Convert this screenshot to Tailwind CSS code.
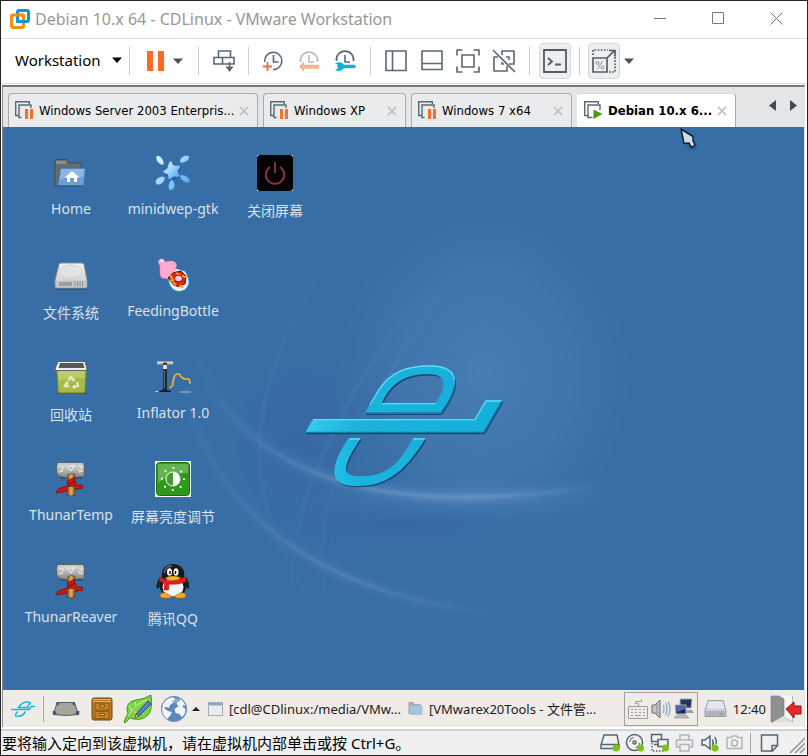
<!DOCTYPE html>
<html lang="zh-CN">
<head>
<meta charset="utf-8">
<meta name="viewport" content="width=device-width, initial-scale=1">
<title>Debian 10.x 64 - CDLinux - VMware Workstation</title>
<script src="https://cdn.jsdelivr.net/npm/@tailwindcss/browser@4"></script>
</head>
<body class="relative flex min-h-screen flex-col overflow-x-hidden border border-[#242424] bg-white font-['Noto_Sans','Noto_Sans_CJK_SC',sans-serif] text-black">

<!-- Shared gradients and symbols -->
<svg class="absolute size-0" aria-hidden="true">
  <defs>
    <linearGradient id="stone" x1="0" y1="0" x2="0" y2="1"><stop offset="0" stop-color="#d8d8d8"/><stop offset=".5" stop-color="#b0b0b0"/><stop offset="1" stop-color="#7a7a7a"/></linearGradient>
    <linearGradient id="wood" x1="0" y1="0" x2="1" y2="0"><stop offset="0" stop-color="#7b5423"/><stop offset=".5" stop-color="#e0ae62"/><stop offset="1" stop-color="#85591f"/></linearGradient>
    <linearGradient id="silver" x1="0" y1="0" x2="0" y2="1"><stop offset="0" stop-color="#f6f6f6"/><stop offset="1" stop-color="#c4c4c4"/></linearGradient>
    <linearGradient id="drop" x1="0" y1="0" x2="1" y2="1"><stop offset="0" stop-color="#eef9ff"/><stop offset=".5" stop-color="#9bd1fb"/><stop offset="1" stop-color="#4a9eee"/></linearGradient>
    <symbol id="vm-paused" viewBox="0 0 19 19">
      <path d="M3.500 14.500H.7V.7h13.600V3M6.500 16.500H4V4h12v3" fill="none" stroke="#5b6874" stroke-width="1.400"/>
      <path d="M10 8h3v10h-3zM15 8h3v10h-3z" fill="#f86f25"/>
    </symbol>
    <symbol id="vm-running" viewBox="0 0 19 19">
      <path d="M3.500 14.500H.7V.7h13.600V3M8.500 16.500H4V4h12v5" fill="none" stroke="#5b6874" stroke-width="1.400"/>
      <path d="M9.500 8.500 18.500 13l-9 5z" fill="#4a9a10"/>
    </symbol>
    <symbol id="hammer" viewBox="0 0 36 36">
      <path d="M6 14h24l-1 4H8z" fill="#17395c" opacity=".5"/>
      <path d="M5 1.500h25l1.500 5L31 16h-6l-6 2-13-2.500L3.500 12V6z" fill="url(#stone)" stroke="#4f5357" stroke-width=".8"/>
      <path d="M5 2h25l1 4.500H4z" fill="#c9c9c9"/>
      <path d="M7 6c4-3 5 3 1 3m5-5 5 6 4-6m-6 1h5m4 4c4 1 5-4 1-4M6 11l4-1m16 1 4-1" fill="none" stroke="#f4f4f4" stroke-width="1"/>
      <path d="M15 13.500q3.500-2 7 0L21 31l1 3q-4 2.800-8 0l1-3z" fill="url(#wood)" stroke="#5f3d14" stroke-width=".7"/>
      <path d="m14 20 8-4-.5 4.500-7 3.500zM14 25l8-5 2 4 5 0 1 3-8 1.500-3-3-6 5-10 1.500 2-4z" fill="#d11510" stroke="#7d0705" stroke-width=".7"/>
      <path d="M15 25.500h6.500l.5 8q-4 3-8 0z" fill="url(#wood)" stroke="#5f3d14" stroke-width=".7"/>
    </symbol>
    <symbol id="tab-close" viewBox="0 0 10 10"><path d="m1 1 8 8m0-8-8 8" stroke="#bcbec0" stroke-width="1.700" fill="none"/></symbol>
    <symbol id="caret" viewBox="0 0 10 6"><path d="M0 .5h10L5 6z" fill="currentColor"/></symbol>
  </defs>
</svg>

<!-- Title bar -->
<header class="flex h-[38px] shrink-0 items-center border-b border-[#e2e2e2] pr-0.5 pb-0.5 pl-[9px]">
  <svg class="size-5" viewBox="0 0 20 20" fill="none" stroke-width="3" aria-hidden="true">
    <rect x="7.500" y="1.500" width="11" height="11" rx="1.500" stroke="#0c97d2"/>
    <rect x="1.500" y="6" width="12" height="12.500" rx="1.500" stroke="#f4900c"/>
    <path d="M7.500 4v8.500h8" stroke="#0c97d2"/>
    <path d="M6 6h6.500q1 0 1 1.500V10" stroke="#f4900c"/>
  </svg>
  <h1 class="ml-[5px] grow truncate text-base leading-5 text-[#989898]">Debian 10.x 64 - CDLinux - VMware Workstation</h1>
  <div class="flex h-full shrink-0 text-[#777]">
    <button type="button" aria-label="Minimize" class="flex w-[58px] items-center justify-center"><svg class="size-[13px]" viewBox="0 0 13 13"><path d="M0 6.500h12" stroke="currentColor"/></svg></button>
    <button type="button" aria-label="Maximize" class="flex w-[58px] items-center justify-center"><svg class="size-[13px]" viewBox="0 0 13 13"><path d="M.5.500h11v11H.5z" fill="none" stroke="currentColor"/></svg></button>
    <button type="button" aria-label="Close" class="flex w-[58px] items-center justify-center"><svg class="size-[13px]" viewBox="0 0 13 13"><path d="m.5.500 12 12m0-12-12 12" stroke="currentColor"/></svg></button>
  </div>
</header>

<!-- Toolbar -->
<nav aria-label="Toolbar" class="flex h-[45px] shrink-0 items-center border-b border-[#dedede] pb-px pl-3.5 text-[#5c6874]">
  <button type="button" class="flex h-8 w-[107px] shrink-0 items-center justify-between pb-0.5 text-[15px] leading-5 text-black">Workstation<svg class="h-[6px] w-2.5"><use href="#caret"/></svg></button>
  <i class="mx-[7px] h-7 w-px shrink-0 bg-[#cdcdcd]"></i>
  <button type="button" aria-label="Suspend" class="flex h-8 w-9 items-center justify-center"><svg class="h-5 w-[17px]" viewBox="0 0 17 20"><path d="M0 0h6v20H0zM11 0h6v20h-6z" fill="#fb6c20"/></svg></button>
  <button type="button" aria-label="Power options" class="flex h-8 w-[18px] items-center text-[#465463]"><svg class="h-[6px] w-2.5"><use href="#caret"/></svg></button>
  <i class="mx-[7px] h-7 w-px shrink-0 bg-[#cdcdcd]"></i>
  <button type="button" aria-label="Send Ctrl+Alt+Del" class="flex h-8 w-9 items-center justify-center"><svg class="size-[22px]" viewBox="0 0 22 22" fill="none" stroke="currentColor" stroke-width="1.600"><path d="M5.500 1h12v6.500h-12zM1 7.500h8.500V14H1zM9.500 14V7.500H21V14H9.500M16.500 12v7"/><path d="M12.500 16.500h8L16.500 22z" fill="currentColor" stroke="none"/></svg></button>
  <i class="mx-1.5 h-7 w-px shrink-0 bg-[#cdcdcd]"></i>
  <button type="button" aria-label="Take snapshot" class="flex h-8 w-9 items-center justify-center"><svg class="size-[22px]" viewBox="0 0 22 22" fill="none" stroke-width="1.600"><path d="M2.700 12A8.600 8.600 0 1 1 11 19.500M11.500 5v7h5" stroke="currentColor"/><path d="M5.500 12v9M1 16.500h9" stroke="#f86f25" stroke-width="1.800"/></svg></button>
  <button type="button" aria-label="Revert snapshot" class="flex h-8 w-9 items-center justify-center"><svg class="size-[22px]" viewBox="0 0 22 22" fill="none" stroke-width="1.600"><path d="M2.500 12A8.600 8.600 0 1 1 19.500 12M11 5v7h5" stroke="#b6bdc2"/><path d="m1 16.500 5-5v3.200h15v4H6V22z" fill="#fdb18c"/></svg></button>
  <button type="button" aria-label="Snapshot manager" class="flex h-8 w-9 items-center justify-center"><svg class="size-[22px]" viewBox="0 0 22 22" fill="none" stroke-width="1.600"><path d="M2.500 11A8.600 8.600 0 1 1 19.500 11M11 5v7h5" stroke="currentColor"/><path d="M5 16.500h15" stroke="#08b1d5" stroke-width="3.600" stroke-linecap="round"/><path d="M1 13.500q6-3 8.500 1v4q-2.500 4-8.500 1.500l3.500-2v-3z" fill="#08b1d5"/></svg></button>
  <i class="mx-[7px] h-7 w-px shrink-0 bg-[#cdcdcd]"></i>
  <button type="button" aria-label="Show library" class="flex h-8 w-9 items-center justify-center"><svg class="size-[22px]" viewBox="0 0 22 22" fill="none" stroke="currentColor" stroke-width="1.600"><path d="M1 1h20v19.500H1zM7.500 1v19.500"/></svg></button>
  <button type="button" aria-label="Show thumbnail bar" class="flex h-8 w-9 items-center justify-center"><svg class="size-[22px]" viewBox="0 0 22 22" fill="none" stroke="currentColor" stroke-width="1.600"><path d="M1 1h20v18.500H1zM1 13.500h20"/></svg></button>
  <button type="button" aria-label="Full screen" class="flex h-8 w-9 items-center justify-center"><svg class="size-6" viewBox="0 0 24 24" fill="none" stroke="currentColor" stroke-width="1.600"><path d="M6 6h12v12H6zM1 6.500V1h5.500M17.500 1H23v5.500M23 17.500V23h-5.500M6.500 23H1v-5.500"/></svg></button>
  <button type="button" aria-label="Unity mode" class="flex h-8 w-9 items-center justify-center"><svg class="size-6" viewBox="0 0 24 24" fill="none" stroke="currentColor" stroke-width="1.600"><path d="M10 6V2h12v13h-5M6 8H2v14h13v-5M10 13v2h2M14 8h3v3M1 1l22 22"/></svg></button>
  <i class="mx-[7px] h-7 w-px shrink-0 bg-[#cdcdcd]"></i>
  <button type="button" aria-label="Console view" aria-pressed="true" class="ml-0.5 flex h-9 w-8 shrink-0 items-center justify-center rounded border border-[#d5d9da] bg-[#edefef]"><svg class="size-6 shrink-0" viewBox="0 0 24 24" fill="none" stroke="#4f5d69" stroke-width="1.800"><path d="M1 1h22v22H1zM5 9l4 3.500L5 16M12 15.500h6"/></svg></button>
  <i class="mx-2 h-7 w-px shrink-0 bg-[#cdcdcd]"></i>
  <button type="button" aria-label="Free stretch" aria-pressed="true" class="flex h-9 w-8 shrink-0 items-center justify-center rounded border border-[#d5d9da] bg-[#edefef]"><svg class="size-6 shrink-0" viewBox="0 0 24 24" fill="none" stroke="#4f5d69" stroke-width="1.700"><path d="M1 9h14v14H1zM15 9l7-7M17 1.500h6v6"/><path d="M1 6V1h15M23 8v15h-6" stroke-dasharray="1.700 1.500"/><path d="m5.500 20 5-8" stroke-width="1" stroke="#888f95"/><circle cx="5.500" cy="14" r="1.500" stroke-width="1" stroke="#888f95"/><circle cx="10.500" cy="18.500" r="1.500" stroke-width="1" stroke="#888f95"/></svg></button>
  <button type="button" aria-label="Stretch options" class="flex h-8 w-3.5 items-center justify-end text-[#465463]"><svg class="h-[6px] w-2.5"><use href="#caret"/></svg></button>
</nav>

<!-- Guest view -->
<main class="mt-px mr-0.5 ml-px flex grow flex-col border-t-2 border-r border-l border-t-[#77797b] border-r-[#e3e3e3] border-l-[#8d8a87] bg-[#e4e5e7]">
  <div class="flex h-10 shrink-0 items-end pl-[5px] font-['DejaVu_Sans_Condensed','DejaVu_Sans',sans-serif] text-[13px] leading-4">
    <div role="tablist" class="flex min-w-0 grow items-end gap-[5px]">
      <div class="flex h-[34px] w-[250px] items-center rounded-t border border-b-0 border-[#a8aaac] bg-[#eaebed] px-1.5">
        <button type="button" role="tab" class="flex min-w-0 grow items-center gap-[5px]"><svg class="size-[19px] shrink-0"><use href="#vm-paused"/></svg><span class="whitespace-nowrap">Windows Server 2003 Enterpris...</span></button>
        <button type="button" aria-label="Close tab" class="p-0.5"><svg class="size-2.5"><use href="#tab-close"/></svg></button>
      </div>
      <div class="flex h-[34px] w-[143px] items-center rounded-t border border-b-0 border-[#a8aaac] bg-[#eaebed] px-1.5">
        <button type="button" role="tab" class="flex min-w-0 grow items-center gap-[5px]"><svg class="size-[19px] shrink-0"><use href="#vm-paused"/></svg><span class="whitespace-nowrap">Windows XP</span></button>
        <button type="button" aria-label="Close tab" class="p-0.5"><svg class="size-2.5"><use href="#tab-close"/></svg></button>
      </div>
      <div class="flex h-[34px] w-[161px] items-center rounded-t border border-b-0 border-[#a8aaac] bg-[#eaebed] px-1.5">
        <button type="button" role="tab" class="flex min-w-0 grow items-center gap-[5px]"><svg class="size-[19px] shrink-0"><use href="#vm-paused"/></svg><span class="whitespace-nowrap">Windows 7 x64</span></button>
        <button type="button" aria-label="Close tab" class="p-0.5"><svg class="size-2.5"><use href="#tab-close"/></svg></button>
      </div>
      <div class="flex h-[34px] w-[159px] items-center rounded-t border border-b-0 border-t-[#d8d8d8] border-r-[#a8aaac] border-l-white bg-white px-1.5">
        <button type="button" role="tab" aria-selected="true" class="flex min-w-0 grow items-center gap-[5px] font-bold"><svg class="size-[19px] shrink-0"><use href="#vm-running"/></svg><span class="whitespace-nowrap">Debian 10.x 6...</span></button>
        <button type="button" aria-label="Close tab" class="p-0.5"><svg class="size-2.5"><use href="#tab-close"/></svg></button>
      </div>
    </div>
    <div class="flex h-full items-center gap-3 pr-1.5 pb-1 text-[#3f4c59]">
      <button type="button" aria-label="Scroll tabs left" class="px-px"><svg class="h-[11px] w-[7px]" viewBox="0 0 7 11"><path d="M7 0v11L0 5.500z" fill="currentColor"/></svg></button>
      <button type="button" aria-label="Scroll tabs right" class="px-px"><svg class="h-[11px] w-[7px]" viewBox="0 0 7 11"><path d="M0 0v11l7-5.500z" fill="currentColor"/></svg></button>
    </div>
  </div>

  <!-- Desktop -->
  <section aria-label="CDLinux desktop" class="relative grow bg-[#386ea6]">
    <svg class="absolute inset-0 size-full" viewBox="3 127 801 563" preserveAspectRatio="xMidYMid slice" fill="none" aria-hidden="true">
      <defs>
        <radialGradient id="glow"><stop offset="0" stop-color="#4a80b5" stop-opacity=".85"/><stop offset=".55" stop-color="#467cb3" stop-opacity=".55"/><stop offset="1" stop-color="#386ea6" stop-opacity="0"/></radialGradient>
        <radialGradient id="violet"><stop offset="0" stop-color="#3966a5" stop-opacity=".8"/><stop offset="1" stop-color="#386ea6" stop-opacity="0"/></radialGradient>
        <radialGradient id="lower"><stop offset="0" stop-color="#5482bf" stop-opacity=".45"/><stop offset="1" stop-color="#5080bc" stop-opacity="0"/></radialGradient>
        <linearGradient id="fade" gradientUnits="userSpaceOnUse" x1="190" y1="0" x2="610" y2="0"><stop offset="0" stop-color="#8db4dd" stop-opacity="0"/><stop offset=".35" stop-color="#93b3dd" stop-opacity=".22"/><stop offset=".7" stop-color="#93bce0" stop-opacity=".23"/><stop offset="1" stop-color="#8db4dd" stop-opacity="0"/></linearGradient>
        <linearGradient id="fade2" gradientUnits="userSpaceOnUse" x1="190" y1="0" x2="500" y2="0"><stop offset="0" stop-color="#8db4dd" stop-opacity=".03"/><stop offset=".5" stop-color="#93b3dd" stop-opacity=".17"/><stop offset="1" stop-color="#8db4dd" stop-opacity="0"/></linearGradient>
        <linearGradient id="thin" gradientUnits="userSpaceOnUse" x1="0" y1="230" x2="0" y2="610"><stop offset="0" stop-color="#7fb0dd" stop-opacity="0"/><stop offset=".5" stop-color="#84b0e0" stop-opacity=".1"/><stop offset="1" stop-color="#84b0e0" stop-opacity="0"/></linearGradient>
        <linearGradient id="cyan" x1="0" y1="0" x2="1" y2="0"><stop offset="0" stop-color="#38cdef"/><stop offset=".25" stop-color="#1ab4de"/><stop offset="1" stop-color="#16aedb"/></linearGradient>
        <filter id="soft"><feGaussianBlur stdDeviation="3"/></filter>
        <filter id="soft1"><feGaussianBlur stdDeviation="1"/></filter>
      </defs>
      <ellipse cx="300" cy="445" rx="120" ry="150" fill="url(#violet)"/>
      <ellipse cx="485" cy="375" rx="160" ry="190" fill="url(#glow)"/>
      <ellipse cx="400" cy="525" rx="160" ry="35" fill="url(#violet)"/>
      <ellipse cx="460" cy="498" rx="160" ry="22" fill="url(#lower)"/>
      <path d="M195 352C220 420 270 458 330 478S470 505 600 486" stroke="url(#fade)" stroke-width="9" filter="url(#soft)"/>
      <path d="M195 352C220 420 270 458 330 478S470 505 600 486" stroke="url(#fade)" stroke-width="3" filter="url(#soft1)"/>
      <path d="M190 405C205 465 240 510 290 545S410 604 500 615" stroke="url(#fade2)" stroke-width="8" filter="url(#soft)"/>
      <path d="M190 405C205 465 240 510 290 545S410 604 500 615" stroke="url(#fade2)" stroke-width="3" filter="url(#soft1)"/>
      <g stroke="url(#thin)" stroke-width="3" filter="url(#soft1)">
        <path d="M345 235C285 320 260 385 260 450S280 550 315 610"/>
        <path d="M480 235C420 290 380 345 350 400S290 520 290 600"/>
        <path d="M465 250C425 320 370 400 345 455S320 540 325 600"/>
      </g>
      <g transform="translate(290 340) scale(.3333)">
        <path transform="translate(3 4)" d="M45 279 69 237H555L588 181H638L582 279ZM223 221 265 150C300 95 350 76 420 76C480 76 500 100 495 135C492 160 475 190 453 221ZM276 189H436C455 165 465 140 459 123C452 105 435 103 410 103C340 103 300 135 276 189ZM176 295H212C190 330 170 360 168 388C170 405 185 409 210 409C280 409 310 380 335 350C350 330 360 310 370 295H406C385 335 350 375 330 392C290 425 250 438 205 438C155 438 133 425 133 395C133 365 155 325 176 295Z" fill="#123a63" opacity=".8" fill-rule="evenodd"/>
        <path d="M45 279 69 237H555L588 181H638L582 279ZM223 221 265 150C300 95 350 76 420 76C480 76 500 100 495 135C492 160 475 190 453 221ZM276 189H436C455 165 465 140 459 123C452 105 435 103 410 103C340 103 300 135 276 189ZM176 295H212C190 330 170 360 168 388C170 405 185 409 210 409C280 409 310 380 335 350C350 330 360 310 370 295H406C385 335 350 375 330 392C290 425 250 438 205 438C155 438 133 425 133 395C133 365 155 325 176 295Z" fill="url(#cyan)" fill-rule="evenodd"/>
        <path d="M69 239H555L588 183H636M240 195 265 152C300 97 350 78 420 78C470 78 490 95 494 120M276 191H436M178 297H210M370 297H404" stroke="#5fdcf5" stroke-width="4"/>
        <path d="M45 277H581L636 183M225 219H452C475 190 490 160 494 135" stroke="#0b7ea8" stroke-width="4"/>
      </g>
    </svg>

    <ul class="relative grid w-max auto-cols-[102px] grid-flow-col grid-rows-[repeat(5,102px)] pt-7 pl-[17px] text-center text-[14px] leading-5 text-[#dbe2ea]">
      <li><a href="#home" class="flex flex-col items-center gap-2"><svg class="size-9" viewBox="0 0 36 36"><path d="M2 31V5.500Q2 4.500 3 4.500h11l2 3.500h11q1 0 1 1V31z" fill="#696c6c" stroke="#484b4d"/><path d="M3 6h10v3H3z" fill="#8b8e8e"/><path d="M7.500 13h24q1 0 1 1l-1.500 15.500q0 1-1 1H4.500z" fill="#6c9dd4" stroke="#386cab"/><path d="M8 14h23.500l-1 8Q15 21 6.500 25z" fill="#8fb6e0"/><path d="m19 16 7.500 6.500H24V27h-3v-4h-4v4h-3v-4.500h-2.500z" fill="#fff"/></svg>Home</a></li>
      <li><a href="#filesystem" class="flex flex-col items-center gap-2 leading-6"><svg class="size-9" viewBox="0 0 36 36"><path d="M3 31h31v2H3z" fill="#26496f" opacity=".6"/><path d="M8 6h21q1.500 0 2 1.500L34 23v6.500q0 1.500-1.500 1.500h-29Q2 31 2 29.500V23L6 7.500Q6.500 6 8 6z" fill="url(#silver)" stroke="#85888a"/><ellipse cx="18" cy="14.500" rx="11.500" ry="6.500" fill="#e4e4e4" stroke="#d1d1d1"/><path d="M3 23.500h30.500v6q0 1-1 1h-28q-1.500 0-1.500-1z" fill="#c5c6c6"/><path d="M6 25h13v4H6z" fill="#9c9d9e"/><path d="M22 24.500v5m2.500-5v5m2.500-5v5m2.500-5v5" stroke="#8b8d8f"/></svg>文件系统</a></li>
      <li><a href="#trash" class="flex flex-col items-center gap-2 leading-6"><svg class="size-9" viewBox="0 0 36 36"><path d="M4 33h29v2H4z" fill="#23456b" opacity=".6"/><path d="M3.500 9h30L32 32.500q0 1.500-1.500 1.500h-24Q5 34 5 32.500z" fill="#a8b94a" stroke="#6d7b1c"/><path d="M5 11h27l-.5 8Q18 17 5.500 22z" fill="#bccb66"/><path d="M5 2.500h27l2 7.500-1 1.500H3L2 10z" fill="#edeeee" stroke="#626567"/><path d="M7 4h23l1.500 5H5.500z" fill="#555b5a"/><g stroke="#e6edba" stroke-width="2.300" fill="none"><path d="m15 21.500 3-3.500 3 3.500M14 23l-2 4h4M24 23l1 4-4 1"/></g><path d="m21.500 18.500.5 4-4-1zM13 22l3 2-3.500 2zM22 25.500l-3.500 2.500 3.500 2z" fill="#e6edba"/></svg>回收站</a></li>
      <li><a href="#thunartemp" class="flex flex-col items-center gap-2"><svg class="size-9"><use href="#hammer"/></svg>ThunarTemp</a></li>
      <li><a href="#thunarreaver" class="flex flex-col items-center gap-2"><svg class="size-9"><use href="#hammer"/></svg>ThunarReaver</a></li>

      <li><a href="#minidwep" class="flex flex-col items-center gap-2"><svg class="size-9" viewBox="0 0 36 36"><path d="m16 7 4 4 7 1-3 5 3 5-6 1-5 4-1-5-6-2 5-5z" fill="#1d4f86" opacity=".5"/><g fill="url(#drop)" stroke="#3c88d2" stroke-width=".5"><path d="M15 6q2 0 3 4 4 1 7 .5.5 2-2.500 5.500 1 3 2.500 5-3 1.500-6 .5-3 2-5 3-1-3-1-5-4-1-5-3 3-2 4.500-3.500Q13 9 15 6z"/><path d="M1.500 1q3-1.500 6 3 2 3.500 1 6-4 0-6.500-4-1.500-3-.5-5zM34 1q-5-2-8.500 3-1 2 0 4 4 0 7-2.500Q35 3 34 1zM1 29q-1.500-5 4-7 3-1 5 .5 0 4-4 6.500-3 1.500-5 0zM34.500 27q1-4-4-6-3-1.500-6-.5 1 4 4.500 6 3 2 5.500.5zM14.500 35q-2-3 0-7.500l2-3q4 3 3 7-1 4-5 3.500z"/></g></svg>minidwep-gtk</a></li>
      <li><a href="#feedingbottle" class="flex flex-col items-center gap-2"><svg class="size-9" viewBox="0 0 36 36"><path d="M5 18 20 11l10 3q5 8 4 13-3 8-11 7.500-8-1-10-12z" fill="#e9f2f8" stroke="#2787d0"/><path d="M4 7Q2 4 5 2.500q4-2 5 2.500 4-1.500 8-1 5 2 3 6l-2 6-7 5q-6 2-7-4V9z" fill="#ffa9cf" stroke="#e77eae" stroke-width=".5"/><path d="M5 4q2-2 3 1" stroke="#ffe6f2" stroke-width="2" fill="none"/><path d="m13 21 5-5 5-1.500 3-.5 5 5-1 8-7 2.500-5-2z" fill="#df280b" stroke="#651208"/><path d="m15 18 3 5-3 1m6-8 5 3m1 0 4 1m-14 5 4 3m4 0 3 3" stroke="#f2a515" stroke-width="2" fill="none"/><ellipse cx="23.500" cy="21.500" rx="4" ry="3.300" fill="#f5cbe4" stroke="#8b1010"/></svg>FeedingBottle</a></li>
      <li><a href="#inflator" class="flex flex-col items-center gap-2"><svg class="size-9" viewBox="0 0 36 36" fill="none"><path d="M0 32.500h11m14 .5h11" stroke="#b6bdc4"/><path d="M2 4.200h16" stroke="#9d9a8e" stroke-width="3"/><path d="M2 3.500h16" stroke="#dcd9cd" stroke-width="2"/><path d="M8 5h4" stroke="#44413c" stroke-width="3"/><path d="M10 6v5" stroke="#e7e7e7" stroke-width="3.500"/><path d="M10 10v21" stroke="#29292b" stroke-width="4"/><path d="M9.300 11v18" stroke="#737477"/><path d="M4 32.500q6-3 12 0z" fill="#1b1b1c" stroke="#1b1b1c"/><path d="M14 28q4 1 4-5 1-9 6-8 4 6 8 5 3-1 3 5" stroke="#e5af2a" stroke-width="1.800"/></svg>Inflator 1.0</a></li>
      <li><a href="#brightness" class="flex flex-col items-center gap-2 leading-6"><svg class="size-9" viewBox="0 0 36 36"><path d="M0 0h36v36H0z" fill="#fff"/><rect x="1.500" y="1.500" width="33" height="33" rx="3" fill="#2e981c" stroke="#197209"/><path d="M3 3h30v9Q14 12 3 22z" fill="#7dbd6d" opacity=".7"/><circle cx="18" cy="18" r="7" fill="#3e9f2d" stroke="#fff"/><path d="M18 11a7 7 0 0 1 0 14z" fill="#fff"/><circle cx="18" cy="18" r="11" fill="none" stroke="#eaffdf" stroke-width="2.200" stroke-linecap="round" stroke-dasharray=".1 8.540"/></svg>屏幕亮度调节</a></li>
      <li><a href="#qq" class="flex flex-col items-center gap-2 leading-6"><svg class="size-9" viewBox="0 0 36 36"><path d="M5 14q-4 6-3.500 12l3-2zM31 14q4 6 3 12l-3-2z" fill="#1c1c20"/><ellipse cx="18" cy="23" rx="13.500" ry="11" fill="#1a1a1e"/><ellipse cx="18" cy="24" rx="10.500" ry="9.500" fill="#f5f5f6"/><path d="M7 15Q5 2 18 1q13 1 11 14z" fill="#17171c"/><path d="M9 10Q10 3 17 3" stroke="#565a68" stroke-width="2" fill="none"/><ellipse cx="14.500" cy="9" rx="2.500" ry="3.800" fill="#fff"/><ellipse cx="21" cy="9" rx="2.500" ry="3.800" fill="#fff"/><path d="M15 8v3m5.500-3v3" stroke="#111" stroke-width="1.500"/><path d="M10 15q8-4 16 0-8 5-16 0z" fill="#f9bb15" stroke="#b26b0b" stroke-width=".5"/><path d="M5 14q13 8 25-.5l1 5Q24 22 14 21l-.5 6H9l.5-7Q6 19 4.500 17z" fill="#eb1d14" stroke="#a30d0a" stroke-width=".5"/><path d="M5 33q1-4 6-3l5 3-1 2H7zM31 33q-1-4-6-3l-5 3 1 2h8z" fill="#f5ad14" stroke="#bb6a09" stroke-width=".6"/></svg>腾讯QQ</a></li>

      <li><a href="#screenoff" class="flex flex-col items-center gap-2 leading-6"><svg class="size-9" viewBox="0 0 36 36" fill="none"><path d="M0 0h36v36H0z" fill="#fff"/><rect width="36" height="36" rx="3" fill="#050506"/><path d="M13 12a9.200 9.200 0 1 0 10 0M18 7v11" stroke="#96303c" stroke-width="1.800"/></svg>关闭屏幕</a></li>
    </ul>

    <!-- Mouse pointer -->
    <svg class="absolute top-0 left-[676px] h-7 w-5" viewBox="0 0 20 28" aria-hidden="true"><path d="m7 19 8 4 3-4-3-5z" fill="#143b67" opacity=".5" filter="url(#soft1)"/><path d="m2 2 12 7.500v4l2 4.500-3.500 2.500-2.500-4.500-5 .5z" fill="#ccd9ea" stroke="#15202c" stroke-width="1.500" stroke-linejoin="round"/></svg>
  </section>

  <!-- Guest panel -->
  <footer class="flex h-[37px] shrink-0 items-center bg-[#efebe7] pl-0.5 text-[13px] leading-5 text-[#1c1c1c]">
    <button type="button" aria-label="Menu" class="flex w-9 justify-center"><svg class="h-4 w-6" viewBox="0 0 24 16" fill="none" stroke="#20b5dc" stroke-width="1.500"><path d="M0 8.500h18.500l1.500-3h4M7.500 6.500Q11 1 16 1t2.500 2-1.500 3.500zM6.500 10.500q-4 5 0 5 5 0 8-5"/></svg></button>
    <i class="mr-1 ml-0.5 h-[26px] w-px bg-[#aaa6a2]"></i>
    <button type="button" aria-label="Show desktop" class="flex w-9 justify-center"><svg class="h-4 w-7" viewBox="0 0 28 16"><path d="M5 1.500h17.500l4 12q-12.500 2-25 0z" fill="#a3a698" stroke="#5b605f"/><path d="M4.500 1h3l-1 3-2 .5zM20 1h3v3.500l-2-.5zM.5 10h3L5 14H1zM27.500 10h-3L23 14h4z" fill="#405c83"/></svg></button>
    <button type="button" aria-label="Files" class="flex w-9 justify-center"><svg class="size-6" viewBox="0 0 24 24"><rect x="2" y="1" width="20" height="22" rx="2" fill="#bd7b1f" stroke="#70430a"/><path d="M3 2.500h18M3 4.500h18" stroke="#e5b164"/><path d="M5 6h14v7H5zM5 14.500h14v7H5z" fill="#c98222" stroke="#8d5712"/><path d="M9.500 8h5v2h-5zM9.500 16.500h5v2h-5z" fill="#e8c17c" stroke="#5f3a08" stroke-width=".8"/></svg></button>
    <button type="button" aria-label="Text editor" class="flex w-9 justify-center"><svg class="size-[30px]" viewBox="0 0 30 30"><path d="M1 28q2-6 4-8Q1 8 13 6q9-1 15-5 2 15-3 20-7 7-18 3l-5 5z" fill="#7cd14a" stroke="#3d9d18"/><path d="M5 22Q13 9 24 6M9 17l-3-6m7 1-1-4M11 18l9 1" stroke="#cbf19c" fill="none"/><path d="m13 20 12-13 3 3-12 12z" fill="#5b84b8" stroke="#28486f"/><path d="m13 20-1 4 4-2z" fill="#efd19b" stroke="#54390e" stroke-width=".7"/></svg></button>
    <button type="button" aria-label="Web browser" class="flex w-9 justify-center"><svg class="size-7" viewBox="0 0 28 28"><circle cx="14" cy="14" r="12.500" fill="#5a87bf" stroke="#8296b1"/><path d="M3 8q4-5 10-6l2 3-3 1 1 2-3 2-1 3-3-1-2 1 4 3 4 1-2 4-2 2-1 2q-4-3-5.500-8zM19 3q5 2 6.500 8l-2-1-1 2 3 2q0 6-4 8l-2-3-4-1-1-4 4-3-2-2 1-2 3-1z" fill="#edf3f8"/><circle cx="14" cy="14" r="12.500" fill="none" stroke="#6d8fbb"/><path d="M4 8Q8 2 15 3q6 1 9 6-12-2-20-1z" fill="#fff" opacity=".3"/></svg></button>
    <svg class="mr-2 h-1 w-2" viewBox="0 0 8 4"><path d="m4 0 4 4H0z" fill="#1d1d1d"/></svg>
    <button type="button" class="flex w-[200px] items-center gap-1.5 text-left"><svg class="h-3.5 w-[15px] shrink-0" viewBox="0 0 15 14"><rect x=".5" y=".5" width="14" height="13" fill="#ebeced" stroke="#a5adb4"/><path d="M1 1h13v2.500H1z" fill="#8fa8c5"/></svg><span class="whitespace-nowrap">[cdl@CDlinux:/media/VMw...</span></button>
    <button type="button" class="flex min-w-0 items-center gap-1.5 text-left"><svg class="h-[15px] w-[15px] shrink-0" viewBox="0 0 15 15"><path d="M.5 13V1h5l1 2h6v10z" fill="#a9a9a7"/><path d="M2 4.500h12.500V14H2z" fill="#a5c4e2"/></svg><span class="truncate">[VMwarex20Tools - 文件管...</span></button>
    <span class="grow"></span>
    <div class="flex h-[34px] shrink-0 items-center gap-[3px] border border-[#a49f99] px-[3px]">
      <svg class="size-5" viewBox="0 0 20 20" fill="none" stroke="#a19f9c"><path d="M.5 7.500h19v12H.5zM3 10.500h2m2 0h2m2 0h2m2 0h2M3 13.500h2m2 0h2m2 0h2m2 0h2M3 16.500h2m2 0h6m2 0h2M10.500 7.500v-3h-3v-2h6V0"/></svg>
      <svg class="size-5" viewBox="0 0 20 20" fill="none"><path d="M1 6h3l5-5v18l-5-5H1z" fill="#c5c6c4" stroke="#6a6c6b"/><path d="M6 5v10" stroke="#888"/><path d="M12 6q2 4 0 8M14.500 4q3 6 0 12M17 2.500q4 7.500 0 15" stroke="#8aa8cc" stroke-width="1.300"/></svg>
      <svg class="h-[22px] w-5" viewBox="0 0 20 22"><path d="M6 1h12l-1 9H6z" fill="#28335f" stroke="#a9afb8"/><path d="M12 12h6l2 3H9z" fill="#9ca0a2"/><path d="M1 7h11v9H2z" fill="#1e2c64" stroke="#b3b9c0"/><path d="M2 8h9v3l-8 3z" fill="#526aa5"/><path d="M3 17h9l3 3H0z" fill="#bebfbd" stroke="#888" stroke-width=".6"/></svg>
    </div>
    <svg class="mx-1.5 h-5 w-[23px] shrink-0" viewBox="0 0 23 20"><path d="M4 1.500h15l3 10v6H1v-6z" fill="#cdd0df" stroke="#999ba6"/><path d="M4.500 2.500h14l2 7h-18z" fill="#e6e8f0"/><path d="M1.500 12h20v5h-20z" fill="#b1b2bb"/><path d="M15 15h4" stroke="#76b944" stroke-width="1.500"/></svg>
    <time class="shrink-0">12:40</time>
    <button type="button" aria-label="Log out" class="mr-0.5 ml-1 shrink-0"><svg class="h-[30px] w-8" viewBox="0 0 32 30"><path d="M1 2h22v26H1z" fill="#b4b6b7"/><path d="M9 2h13v25l-9-5z" fill="#f6f6f6"/><path d="M1 2h8l5 3v17L3 28H1z" fill="#8e9092" stroke="#74777a" stroke-width=".6"/><path d="m3 28 10-6 9 6z" fill="#dededf"/><path d="m16 15 8-7v4h7v8h-7v4z" fill="#e62928" stroke="#a20e0e"/></svg></button>
  </footer>
</main>

<!-- Status bar -->
<footer class="mt-0.5 flex h-[26px] shrink-0 items-center border-t-2 border-[#d4d4d4] bg-[#f0f0f0] pl-px text-[#566572]">
  <p class="min-w-0 grow truncate text-[15px] leading-5 text-black">要将输入定向到该虚拟机，请在虚拟机内部单击或按 Ctrl+G。</p>
  <div class="flex shrink-0 items-center gap-[5px] pr-0.5">
    <svg class="size-5" viewBox="0 0 20 20" fill="none" stroke="currentColor" stroke-width="1.500"><path d="M4 2h13l2 10v3.500H1V12zM1 11.500h18"/><circle cx="16" cy="15" r="3.500" fill="#7cc414" stroke="none"/></svg>
    <svg class="size-5" viewBox="0 0 20 20" fill="none" stroke="currentColor" stroke-width="1.500"><circle cx="9.500" cy="9.500" r="8"/><circle cx="9.500" cy="9.500" r="1.500"/><path d="M4.500 9q.5-4 4-4.500M14.500 10q-.5 4-4 4.500" stroke-width="1"/><circle cx="15.500" cy="15" r="3.500" fill="#7cc414" stroke="none"/></svg>
    <svg class="size-5" viewBox="0 0 20 20" fill="none" stroke="currentColor" stroke-width="1.500"><path d="M8 8.500H1.500v-7h10v5M4 11.500h5M8 6.500h10v7H8z"/><path d="M2 10v8h12" stroke-dasharray="1.500 1.500"/><circle cx="15.500" cy="15" r="3.500" fill="#7cc414" stroke="none"/></svg>
    <svg class="size-5" viewBox="0 0 20 20" fill="none" stroke="#aeb5bb" stroke-width="1.500"><path d="M5 7V2h9v5M5 14H1.500V7h16v7H14M5 11.500h9V18H5z"/></svg>
    <svg class="size-5" viewBox="0 0 20 20" fill="none" stroke="currentColor" stroke-width="1.500"><path d="M2 7h3l5-4v13l-5-4H2zM12.500 6.500q1.500 3 0 6M15 4q2 4 1 7"/><circle cx="15" cy="15" r="3.500" fill="#7cc414" stroke="none"/></svg>
    <svg class="size-5" viewBox="0 0 20 20" fill="none" stroke="#aeb5bb" stroke-width="1.500"><path d="M2 4.500h4L7.500 3h4L13 4.500h4v11H2z"/><circle cx="9.500" cy="10" r="3"/></svg>
    <i class="mr-1 h-5 w-px bg-[#a8a8a8]"></i>
    <svg class="size-5" viewBox="0 0 20 20" fill="none" stroke="currentColor" stroke-width="1.500"><path d="M1.500 2h16v10.500L12.500 18h-11zM12 18v-5.500h5.500"/></svg>
    <svg class="ml-1 size-4 self-end" viewBox="0 0 16 16"><path d="M1 16 16 1M6 16 16 6M11 16l5-5" stroke="#9c9c9c" stroke-width="1.700"/></svg>
  </div>
</footer>
</body>
</html>
